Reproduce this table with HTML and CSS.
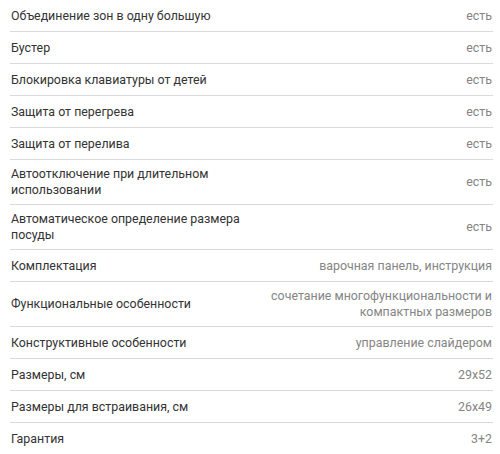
FILE: index.html
```html
<!DOCTYPE html>
<html lang="ru">
<head>
<meta charset="utf-8">
<link rel="stylesheet" href="styles.css">
</head>
<body>
<div class="specs">
  <div class="row"><div class="name">Объединение зон в одну большую</div><div class="value">есть</div></div>
  <div class="row"><div class="name">Бустер</div><div class="value">есть</div></div>
  <div class="row"><div class="name">Блокировка клавиатуры от детей</div><div class="value">есть</div></div>
  <div class="row"><div class="name">Защита от перегрева</div><div class="value">есть</div></div>
  <div class="row"><div class="name">Защита от перелива</div><div class="value">есть</div></div>
  <div class="row"><div class="name">Автоотключение при длительном использовании</div><div class="value">есть</div></div>
  <div class="row"><div class="name">Автоматическое определение размера посуды</div><div class="value">есть</div></div>
  <div class="row"><div class="name">Комплектация</div><div class="value">варочная панель, инструкция</div></div>
  <div class="row"><div class="name">Функциональные особенности</div><div class="value">сочетание многофункциональности и компактных размеров</div></div>
  <div class="row"><div class="name">Конструктивные особенности</div><div class="value">управление слайдером</div></div>
  <div class="row"><div class="name">Размеры, см</div><div class="value">29x52</div></div>
  <div class="row"><div class="name">Размеры для встраивания, см</div><div class="value">26x49</div></div>
  <div class="row"><div class="name">Гарантия</div><div class="value">3+2</div></div>
</div>
</body>
</html>
```
FILE: styles.css
```css
html, body {
  margin: 0;
  padding: 0;
  background: #fff;
}
body {
  font-family: Roboto, "Liberation Sans", sans-serif;
  font-size: 12.4px;
  line-height: 16px;
}
.specs {
  margin: 0 7px 0 10px;
}
.row {
  display: grid;
  grid-template-columns: 1fr 1fr;
  align-items: center;
  column-gap: 16px;
  min-height: 32px;
  padding: 6px 1px;
  box-sizing: border-box;
  border-bottom: 1px solid #dadada;
}
.name {
  color: #333;
}
.value {
  color: #858585;
  text-align: right;
}
```
